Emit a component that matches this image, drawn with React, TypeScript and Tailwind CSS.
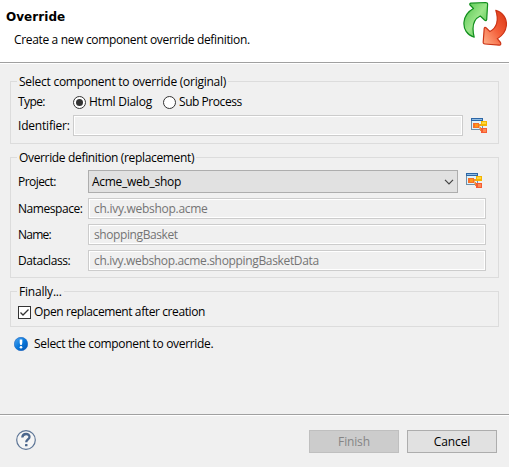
import React from "react";

function TreeIcon() {
  return (
    <svg width="17" height="16" viewBox="0 0 17 16" className="block shrink-0" shapeRendering="crispEdges">
      <rect x="0" y="0" width="12" height="12" fill="#6f8fa8" />
      <rect x="0" y="0" width="12" height="3" fill="#2c66a6" />
      <rect x="1" y="1" width="10" height="1" fill="#8fbbe2" />
      <rect x="1" y="3" width="10" height="8" fill="#dff3fb" />
      <rect x="8" y="6" width="2" height="2" fill="#f09a28" />
      <rect x="8" y="8" width="1" height="3" fill="#f6b070" />
      <rect x="9" y="9" width="1" height="4" fill="#f08a38" />
      <rect x="2" y="5" width="6" height="5" fill="#f4702a" />
      <rect x="4" y="6" width="3" height="3" fill="#ff9818" />
      <rect x="10" y="3" width="6" height="5" fill="#f4b400" />
      <rect x="11" y="4" width="4" height="2" fill="#ffd83a" />
      <rect x="10" y="10" width="6" height="5" fill="#f65c34" />
      <rect x="12" y="11" width="3" height="3" fill="#ff8a50" />
    </svg>
  );
}

function RefreshLogo() {
  return (
    <svg width="46" height="47" viewBox="0 0 46 47" className="block">
      <defs>
        <linearGradient id="green" x1="0" y1="0" x2="1" y2="1">
          <stop offset="0" stopColor="#4fc44a" />
          <stop offset="0.5" stopColor="#9be58a" />
          <stop offset="1" stopColor="#3dbb3c" />
        </linearGradient>
        <linearGradient id="red" x1="1" y1="0" x2="0" y2="1">
          <stop offset="0" stopColor="#d93412" />
          <stop offset="0.5" stopColor="#f4603a" />
          <stop offset="1" stopColor="#ffb48e" />
        </linearGradient>
      </defs>
      <path d="M8 3.200L22.500 2.500Q24.700 2.500 24.600 4.500L23.700 19.500Q23.200 21.500 21.500 20L17.300 16C11 19 8.500 26.500 11.200 37.200C4 35 .3 29 1 22C1.700 15.500 5.500 11.200 10.500 8.500L7 5Q6.200 3.500 8 3.200Z" fill="url(#green)" stroke="#128f1e" strokeWidth="1.200" strokeLinejoin="round" />
      <path d="M32.800 10.300C40 12.500 44 18.500 43.400 25.500C42.700 31.500 39.500 35.700 34.300 38.700L37.500 42.500Q38.500 45.300 36.200 45.200L22 44Q20 43.800 20.200 42L21.200 28.500Q21.700 26.500 23.300 28L27 31.600C33.300 28 36 20.500 32.800 10.300Z" fill="url(#red)" stroke="#cc3517" strokeWidth="1.200" strokeLinejoin="round" />
    </svg>
  );
}

function Group({ title, tracking, className, children }: { title: string; tracking: string; className: string; children: React.ReactNode }) {
  return (
    <section className={`w-[489px] border border-[#dcdcdc] ${className}`}>
      <div className="-mt-2 flex h-4">
        <h2 className={`ml-1.5 h-4 bg-[#f0f0f0] px-0.5 leading-4 ${tracking}`}>{title}</h2>
      </div>
      {children}
    </section>
  );
}

function Radio({ checked }: { checked?: boolean }) {
  return (
    <span className="flex size-[13px] shrink-0 items-center justify-center rounded-full border border-[#333] bg-white">
      {checked && <span className="size-[7px] rounded-full bg-[#333]" />}
    </span>
  );
}

function Field({ label, value, tracking, valueTracking }: { label: string; value: string; tracking: string; valueTracking: string }) {
  return (
    <div className="flex h-[21px] items-center">
      <span className={`w-[70px] shrink-0 ${tracking}`}>{label}</span>
      <div className={`flex h-[21px] w-[398px] items-center border border-[#ccc] pl-[5px] text-[#747474] shadow-[inset_0_0_0_1px_white] ${valueTracking}`}>{value}</div>
    </div>
  );
}

export default function App() {
  return (
    <main className="flex h-[467px] w-[509px] flex-col overflow-hidden bg-[#f0f0f0] font-['Open_Sans','Noto_Sans',sans-serif] text-[12px] leading-4 whitespace-nowrap text-black">
      <header className="flex h-[63px] shrink-0 justify-between border-b border-[#a0a0a0] bg-white">
        <div className="flex flex-col pt-[9px]">
          <h1 className="pl-[6px] font-['DejaVu_Sans',sans-serif] text-[12px] leading-4 font-bold tracking-[0.05px]">Override</h1>
          <p className="pt-[7px] pl-[14px] tracking-[-0.34px]">Create a new component override definition.</p>
        </div>
        <RefreshLogo />
      </header>
      <div className="flex h-[351px] shrink-0 flex-col border-t border-white pl-[10px]">
        <Group title="Select component to override (original)" tracking="tracking-[-0.26px]" className="mt-[17px] h-[63px]">
          <div className="mt-1 flex h-4 items-center pl-[7px]">
            <span className="w-[55px] tracking-[-0.6px]">Type:</span>
            <Radio checked />
            <span className="w-[77px] pl-[3px] tracking-[-0.24px]">Html Dialog</span>
            <Radio />
            <span className="pl-[3px] tracking-[-0.45px]">Sub Process</span>
          </div>
          <div className="mt-[5px] flex h-[21px] items-center pl-[7px]">
            <span className="w-[55px] tracking-[-0.2px]">Identifier:</span>
            <div className="h-[21px] w-[390px] border border-[#ccc] shadow-[inset_0_0_0_1px_white]" />
            <div className="pl-2"><TreeIcon /></div>
          </div>
        </Group>
        <Group title="Override definition (replacement)" tracking="tracking-[-0.34px]" className="mt-[13px] h-[121px]">
          <div className="mt-1 flex h-[23px] items-center pl-[7px]">
            <span className="w-[70px] tracking-[-0.55px]">Project:</span>
            <div className="flex h-[23px] w-[370px] items-center justify-between border border-[#adadad] bg-[#e1e1e1] pr-[3px] pl-[3px]">
              <span className="tracking-[-0.28px]">Acme_web_shop</span>
              <svg width="10" height="6" viewBox="0 0 10 6" className="block"><path d="M1 .8L5 4.800L9 .8" fill="none" stroke="#444" strokeWidth="1.200" /></svg>
            </div>
            <div className="pb-0.5 pl-2"><TreeIcon /></div>
          </div>
          <div className="mt-[5px] flex flex-col gap-[5px] pl-[7px]">
            <Field label="Namespace:" value="ch.ivy.webshop.acme" tracking="tracking-[-0.45px]" valueTracking="tracking-[-0.28px]" />
            <Field label="Name:" value="shoppingBasket" tracking="tracking-[-0.75px]" valueTracking="tracking-[-0.4px]" />
            <Field label="Dataclass:" value="ch.ivy.webshop.acme.shoppingBasketData" tracking="tracking-[-0.4px]" valueTracking="tracking-[-0.34px]" />
          </div>
        </Group>
        <Group title="Finally..." tracking="tracking-[-0.2px]" className="mt-[13px] h-[36px]">
          <div className="mt-1 flex h-4 items-center pl-[7px]">
            <span className="flex size-[13px] items-center justify-center border border-[#333] bg-white">
              <svg width="11" height="11" viewBox="0 0 11 11"><path d="M1.500 5.500L4 8L9.500 2.500" fill="none" stroke="#333" strokeWidth="1.300" /></svg>
            </span>
            <span className="pl-[3px] tracking-[-0.4px]">Open replacement after creation</span>
          </div>
        </Group>
        <div className="mt-[9px] flex h-4 items-center pl-1">
          <svg width="14" height="14" viewBox="0 0 14 14">
            <defs><linearGradient id="info" x1="0" x2="1" y1="0" y2="1"><stop stopColor="#54a8ee" /><stop offset=".5" stopColor="#0878dc" /><stop offset="1" stopColor="#0753ae" /></linearGradient></defs>
            <circle cx="7" cy="7" r="6.700" fill="url(#info)" stroke="#1260bd" strokeWidth=".6" />
            <path d="M5.700 2.500h2.600v3.500L7.700 8H6.300L5.700 6Z" fill="white" /><circle cx="7" cy="10.300" r="1.300" fill="white" />
          </svg>
          <span className="pl-1.5 tracking-[-0.32px]">Select the component to override.</span>
        </div>
      </div>
      <footer className="flex h-[53px] shrink-0 items-start justify-between border-t border-[#a0a0a0] pr-3 pl-4 shadow-[inset_0_1px_0_white]">
        <svg width="20" height="20" viewBox="0 0 20 20" className="mt-[15px] block">
          <circle cx="10" cy="10" r="9.300" fill="#f5f5f5" stroke="#5d7596" strokeWidth="1.200" />
          <path d="M6.300 7.500C6.500 2.800 13.700 3 13.500 7C13.400 9.500 10.300 9.500 10.200 12.300" fill="none" stroke="#4b668c" strokeWidth="2.300" /><rect x="9" y="14" width="2.500" height="2.300" rx=".6" fill="#4b668c" />
        </svg>
        <div className="mt-[15px] flex gap-2">
          <button className="h-[23px] w-[90px] border border-[#bfbfbf] bg-[#ccc] tracking-[-0.15px] text-[#858585]">Finish</button>
          <button className="h-[23px] w-[90px] border border-[#adadad] bg-[#e1e1e1] tracking-[-0.1px]">Cancel</button>
        </div>
      </footer>
    </main>
  );
}
